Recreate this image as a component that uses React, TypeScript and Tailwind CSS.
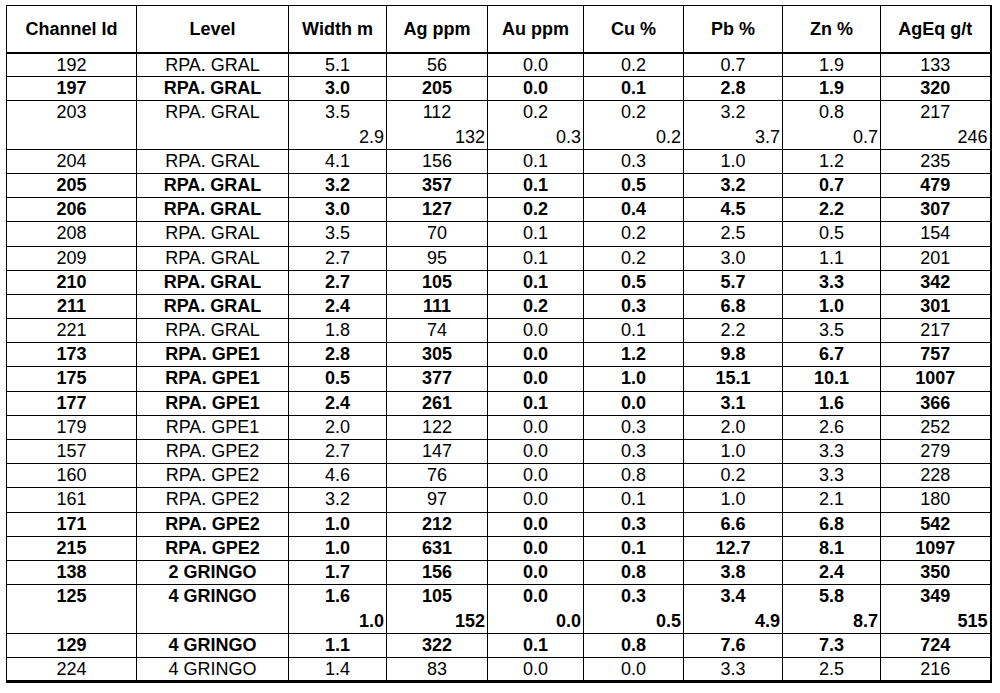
import React from 'react';

type Row = {
  id: string;
  level: string;
  vals: string[];
  bold?: boolean;
  extra?: string[];
};

const headers = ['Channel Id', 'Level', 'Width m', 'Ag ppm', 'Au ppm', 'Cu %', 'Pb %', 'Zn %', 'AgEq g/t'];
const widths = ['w-[130px]', 'w-[152px]', 'w-[98px]', 'w-[101px]', 'w-[96px]', 'w-[100px]', 'w-[99px]', 'w-[98px]', 'w-[110px]'];

const rows: Row[] = [
  { id: '192', level: 'RPA. GRAL', vals: ['5.1', '56', '0.0', '0.2', '0.7', '1.9', '133'] },
  { id: '197', level: 'RPA. GRAL', vals: ['3.0', '205', '0.0', '0.1', '2.8', '1.9', '320'], bold: true },
  {
    id: '203',
    level: 'RPA. GRAL',
    vals: ['3.5', '112', '0.2', '0.2', '3.2', '0.8', '217'],
    extra: ['2.9', '132', '0.3', '0.2', '3.7', '0.7', '246'],
  },
  { id: '204', level: 'RPA. GRAL', vals: ['4.1', '156', '0.1', '0.3', '1.0', '1.2', '235'] },
  { id: '205', level: 'RPA. GRAL', vals: ['3.2', '357', '0.1', '0.5', '3.2', '0.7', '479'], bold: true },
  { id: '206', level: 'RPA. GRAL', vals: ['3.0', '127', '0.2', '0.4', '4.5', '2.2', '307'], bold: true },
  { id: '208', level: 'RPA. GRAL', vals: ['3.5', '70', '0.1', '0.2', '2.5', '0.5', '154'] },
  { id: '209', level: 'RPA. GRAL', vals: ['2.7', '95', '0.1', '0.2', '3.0', '1.1', '201'] },
  { id: '210', level: 'RPA. GRAL', vals: ['2.7', '105', '0.1', '0.5', '5.7', '3.3', '342'], bold: true },
  { id: '211', level: 'RPA. GRAL', vals: ['2.4', '111', '0.2', '0.3', '6.8', '1.0', '301'], bold: true },
  { id: '221', level: 'RPA. GRAL', vals: ['1.8', '74', '0.0', '0.1', '2.2', '3.5', '217'] },
  { id: '173', level: 'RPA. GPE1', vals: ['2.8', '305', '0.0', '1.2', '9.8', '6.7', '757'], bold: true },
  { id: '175', level: 'RPA. GPE1', vals: ['0.5', '377', '0.0', '1.0', '15.1', '10.1', '1007'], bold: true },
  { id: '177', level: 'RPA. GPE1', vals: ['2.4', '261', '0.1', '0.0', '3.1', '1.6', '366'], bold: true },
  { id: '179', level: 'RPA. GPE1', vals: ['2.0', '122', '0.0', '0.3', '2.0', '2.6', '252'] },
  { id: '157', level: 'RPA. GPE2', vals: ['2.7', '147', '0.0', '0.3', '1.0', '3.3', '279'] },
  { id: '160', level: 'RPA. GPE2', vals: ['4.6', '76', '0.0', '0.8', '0.2', '3.3', '228'] },
  { id: '161', level: 'RPA. GPE2', vals: ['3.2', '97', '0.0', '0.1', '1.0', '2.1', '180'] },
  { id: '171', level: 'RPA. GPE2', vals: ['1.0', '212', '0.0', '0.3', '6.6', '6.8', '542'], bold: true },
  { id: '215', level: 'RPA. GPE2', vals: ['1.0', '631', '0.0', '0.1', '12.7', '8.1', '1097'], bold: true },
  { id: '138', level: '2 GRINGO', vals: ['1.7', '156', '0.0', '0.8', '3.8', '2.4', '350'], bold: true },
  {
    id: '125',
    level: '4 GRINGO',
    vals: ['1.6', '105', '0.0', '0.3', '3.4', '5.8', '349'],
    extra: ['1.0', '152', '0.0', '0.5', '4.9', '8.7', '515'],
    bold: true,
  },
  { id: '129', level: '4 GRINGO', vals: ['1.1', '322', '0.1', '0.8', '7.6', '7.3', '724'], bold: true },
  { id: '224', level: '4 GRINGO', vals: ['1.4', '83', '0.0', '0.0', '3.3', '2.5', '216'] },
];

const cell = 'border border-black p-0 align-top';

export default function App() {
  return (
    <div className="bg-white w-[1000px] h-[693px] pl-[6px] pt-[5px] text-black font-['Liberation_Sans',Arial,sans-serif]">
      <table className="table-fixed border-collapse border-r-2 border-b-[3px] border-black text-[18px] leading-[22px]">
        <colgroup>
          {widths.map((w, i) => (
            <col key={i} className={w} />
          ))}
        </colgroup>
        <thead>
          <tr>
            {headers.map((h) => (
              <th key={h} className="border border-black border-b-2 h-[47px] font-bold text-center align-middle p-0">
                {h}
              </th>
            ))}
          </tr>
        </thead>
        <tbody>
          {rows.map((r) => {
            const weight = r.bold ? 'font-bold' : 'font-normal';
            const h = r.extra ? 'h-[48.4px]' : 'h-[24.2px]';
            return (
              <tr key={r.id} className={weight}>
                <td className={`${cell} ${h} text-center`}>{r.id}</td>
                <td className={`${cell} text-center`}>{r.level}</td>
                {r.vals.map((v, i) => (
                  <td key={i} className={cell}>
                    <div className="text-center">{v}</div>
                    {r.extra && <div className="text-right pr-[2px] pt-[3px]">{r.extra[i]}</div>}
                  </td>
                ))}
              </tr>
            );
          })}
        </tbody>
      </table>
    </div>
  );
}
